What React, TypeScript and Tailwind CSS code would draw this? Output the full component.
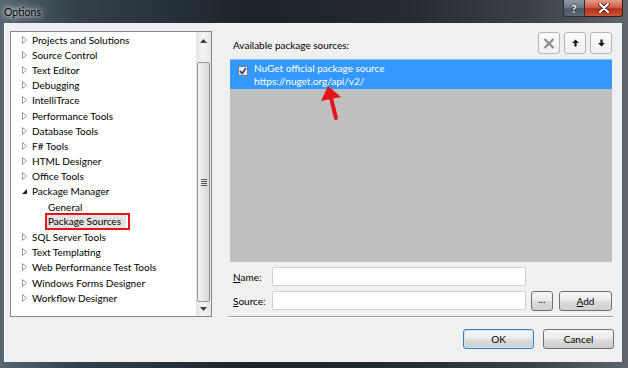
import React from "react";

const treeItems: { label: string; kind: "collapsed" | "expanded" | "child" | "selected" }[] = [
  { label: "Projects and Solutions", kind: "collapsed" },
  { label: "Source Control", kind: "collapsed" },
  { label: "Text Editor", kind: "collapsed" },
  { label: "Debugging", kind: "collapsed" },
  { label: "IntelliTrace", kind: "collapsed" },
  { label: "Performance Tools", kind: "collapsed" },
  { label: "Database Tools", kind: "collapsed" },
  { label: "F# Tools", kind: "collapsed" },
  { label: "HTML Designer", kind: "collapsed" },
  { label: "Office Tools", kind: "collapsed" },
  { label: "Package Manager", kind: "expanded" },
  { label: "General", kind: "child" },
  { label: "Package Sources", kind: "selected" },
  { label: "SQL Server Tools", kind: "collapsed" },
  { label: "Text Templating", kind: "collapsed" },
  { label: "Web Performance Test Tools", kind: "collapsed" },
  { label: "Windows Forms Designer", kind: "collapsed" },
  { label: "Workflow Designer", kind: "collapsed" },
];

function CollapsedArrow() {
  return (
    <svg width="5" height="8" viewBox="0 0 5 8" className="shrink-0">
      <path d="M0.5 0.5 L4.5 4 L0.5 7.5 Z" fill="#fff" stroke="#9a9a9a" strokeWidth="1" />
    </svg>
  );
}

function ExpandedArrow() {
  return (
    <svg width="5" height="8" viewBox="0 0 5 8" className="shrink-0">
      <path d="M5 2 L5 7 L0 7 Z" fill="#222" />
    </svg>
  );
}

function TreeRow({ label, kind }: { label: string; kind: string }) {
  if (kind === "child") {
    return (
      <div className="h-[15.2px] flex items-center pl-[37px] whitespace-nowrap">{label}</div>
    );
  }
  if (kind === "selected") {
    return (
      <div className="h-[15.2px] flex items-center pl-[34px] whitespace-nowrap">
        <div className="h-[17px] border-2 border-[#e8141c] pr-[2px] flex items-center">
          <div className="h-[13px] bg-[#e3e3e3] pl-[1px] pr-[5px] flex items-center leading-[13px]">
            {label}
          </div>
        </div>
      </div>
    );
  }
  return (
    <div className="h-[15.2px] flex items-center pl-[11px] whitespace-nowrap">
      <div className="w-[5px] flex justify-center">
        {kind === "expanded" ? <ExpandedArrow /> : <CollapsedArrow />}
      </div>
      <span className="ml-[5px]">{label}</span>
    </div>
  );
}

function WinButton({ className, children }: { className?: string; children: React.ReactNode }) {
  return (
    <div
      className={
        "flex items-center justify-center rounded-[3px] border bg-[linear-gradient(180deg,#f6f6f6_0%,#ebebeb_48%,#dddddd_52%,#cfcfcf_100%)] " +
        (className ?? "")
      }
    >
      {children}
    </div>
  );
}

function ToolButton({ children }: { children: React.ReactNode }) {
  return (
    <div className="w-[22px] h-[22px] flex items-center justify-center rounded-[3px] border border-[#b5b5b5] bg-[linear-gradient(180deg,#fbfbfb_0%,#f0f0f0_100%)]">
      {children}
    </div>
  );
}

export default function App() {
  return (
    <div className="w-[628px] h-[368px] relative overflow-hidden flex flex-col text-[10px] leading-[12px] text-black [font-family:Lato,sans-serif] bg-[linear-gradient(90deg,#56656f_0%,#34414a_12%,#1c232a_40%,#252b31_65%,#3c4248_85%,#5f656b_100%)]">
      {/* Title bar */}
      <div className="h-[23px] shrink-0 flex items-start">
        <div className="pl-[4px] pt-[6px] text-[10.5px] leading-[12px] text-black [text-shadow:0_0_4px_#ffffff,0_0_8px_#ffffff]">
          Options
        </div>
        <div className="ml-auto mr-[5px] flex">
          <div className="w-[22px] h-[17px] rounded-bl-[4px] border border-t-0 border-[#2a2f35] bg-[linear-gradient(180deg,#8c98a2_0%,#6b7781_50%,#4d5761_55%,#5e6a74_100%)] flex items-center justify-center text-white font-bold text-[11px] leading-[11px] [text-shadow:0_0_2px_#000]">
            ?
          </div>
          <div className="w-[38px] h-[17px] rounded-br-[4px] border border-l-0 border-t-0 border-[#3a1a16] bg-[linear-gradient(180deg,#e39a8c_0%,#d0604c_45%,#b8301c_55%,#c9543c_100%)] flex items-center justify-center">
            <svg width="12" height="10" viewBox="0 0 12 10">
              <path d="M2 1 L10 9 M10 1 L2 9" stroke="#5a1a10" strokeWidth="4" strokeLinecap="round" />
              <path d="M2 1 L10 9 M10 1 L2 9" stroke="#ffffff" strokeWidth="2.2" strokeLinecap="round" />
            </svg>
          </div>
        </div>
      </div>

      {/* Client area */}
      <div className="flex-1 ml-[4px] mr-[6px] mb-[6px] bg-[#f0f0f0] border-l border-white flex pl-[5px] pt-[8px]">
        {/* Tree panel */}
        <div className="w-[202px] h-[286px] border border-[#828790] bg-white flex">
          <div className="flex-1 flex flex-col">
            {treeItems.map((it) => (
              <TreeRow key={it.label} label={it.label} kind={it.kind} />
            ))}
          </div>
          {/* Scrollbar */}
          <div className="w-[15px] flex flex-col bg-[linear-gradient(90deg,#e6e6e6_0%,#f4f4f4_50%,#e6e6e6_100%)]">
            <div className="h-[17px] flex items-center justify-center">
              <svg width="7" height="4" viewBox="0 0 7 4">
                <path d="M3.5 0 L7 4 L0 4 Z" fill="#3c3c3c" />
              </svg>
            </div>
            <div className="h-[13px]" />
            <div className="h-[240px] mx-[1px] rounded-[2px] border border-[#979797] bg-[linear-gradient(90deg,#f2f2f2_0%,#e6e6e6_50%,#d4d4d4_100%)] flex items-center justify-center">
              <div className="flex flex-col gap-[1px]">
                <div className="w-[6px] h-[1px] bg-[#555]" />
                <div className="w-[6px] h-[1px] bg-[#555]" />
                <div className="w-[6px] h-[1px] bg-[#555]" />
                <div className="w-[6px] h-[1px] bg-[#555]" />
              </div>
            </div>
            <div className="h-[14px] flex items-center justify-center">
              <svg width="7" height="4" viewBox="0 0 7 4">
                <path d="M0 0 L7 0 L3.5 4 Z" fill="#3c3c3c" />
              </svg>
            </div>
          </div>
        </div>

        {/* Right column */}
        <div className="w-[384px] ml-[18px] flex flex-col">
          {/* Header row */}
          <div className="h-[24px] flex">
            <div className="self-end pl-[3px] pb-[4px] leading-[12px] whitespace-nowrap">
              Available package sources:
            </div>
            <div className="ml-auto mr-[2px] mt-[1px] flex gap-[4px]">
              <ToolButton>
                <svg width="12" height="11" viewBox="0 0 12 11">
                  <path d="M1.5 1 L10.5 10 M10.5 1 L1.5 10" stroke="#8a8a8a" strokeWidth="2.2" />
                </svg>
              </ToolButton>
              <ToolButton>
                <svg width="7" height="8" viewBox="0 0 7 8">
                  <path d="M3.5 0.5 L7 4 L4.6 4 L4.6 7.5 L2.4 7.5 L2.4 4 L0 4 Z" fill="#1a1a1a" />
                </svg>
              </ToolButton>
              <ToolButton>
                <svg width="7" height="8" viewBox="0 0 7 8">
                  <path d="M2.4 0.5 L4.6 0.5 L4.6 4 L7 4 L3.5 7.5 L0 4 L2.4 4 Z" fill="#1a1a1a" />
                </svg>
              </ToolButton>
            </div>
          </div>

          {/* Sources list */}
          <div className="mt-[4px] mr-[2px] h-[203px] bg-[#c0c0c0] flex flex-col">
            <div className="h-[30px] bg-[#3399ff] border-t border-[#7fbfff] flex items-start pl-[8px] text-white">
              <div className="mt-[6px] w-[10px] h-[10px] border border-[#7a7a7a] bg-[linear-gradient(180deg,#f6f6f6_0%,#dedede_100%)] flex items-center justify-center">
                <svg width="8" height="8" viewBox="0 0 8 8">
                  <path d="M1 4 L3.2 6.5 L7 1" fill="none" stroke="#223a8a" strokeWidth="1.6" />
                </svg>
              </div>
              <div className="ml-[6px] pt-[1.5px] leading-[13px] whitespace-nowrap">
                <div>NuGet official package source</div>
                <div>https://nuget.org/api/v2/</div>
              </div>
            </div>
          </div>

          {/* Name row */}
          <div className="mt-[5px] h-[19px] flex items-center">
            <div className="w-[42px] pl-[3px]">
              <span className="underline underline-offset-[1px]">N</span>ame:
            </div>
            <div className="w-[254px] h-[19px] bg-white border border-[#cfd3d8] rounded-[1px]" />
          </div>

          {/* Source row */}
          <div className="mt-[5px] h-[19px] flex items-center">
            <div className="w-[42px] pl-[3px]">
              <span className="underline underline-offset-[1px]">S</span>ource:
            </div>
            <div className="w-[254px] h-[19px] bg-white border border-[#cfd3d8] rounded-[1px]" />
            <WinButton className="ml-[5px] w-[22px] h-[20px] border-[#707070] leading-[10px] pb-[3px]">...</WinButton>
            <WinButton className="ml-[6px] w-[53px] h-[20px] border-[#707070]">
              <span>
                <span className="underline underline-offset-[1px]">A</span>dd
              </span>
            </WinButton>
          </div>

          {/* Separator */}
          <div className="mt-[6px] -ml-[2px] mr-[1px] h-[2px] border-t border-[#a0a0a0] border-b border-b-white" />

          {/* OK / Cancel */}
          <div className="mt-[11px] flex justify-end gap-[9px]">
            <WinButton className="w-[71px] h-[20px] border-[#3c7fb1] shadow-[inset_0_0_0_1px_#c3e6f9] bg-[linear-gradient(180deg,#eaf6fd_0%,#d9f0fc_48%,#bee6fd_52%,#a7d9f5_100%)]">
              OK
            </WinButton>
            <WinButton className="w-[71px] h-[20px] border-[#707070]">Cancel</WinButton>
          </div>
        </div>
      </div>

      {/* Red annotation arrow */}
      <svg className="absolute left-[315px] top-[82px]" width="30" height="40" viewBox="0 0 30 40">
        <path d="M16 16 L21 36" stroke="#e8141c" strokeWidth="4" strokeLinecap="round" />
        <path d="M13 4 L6 19 L26 15 Z" fill="#e8141c" />
      </svg>
    </div>
  );
}
